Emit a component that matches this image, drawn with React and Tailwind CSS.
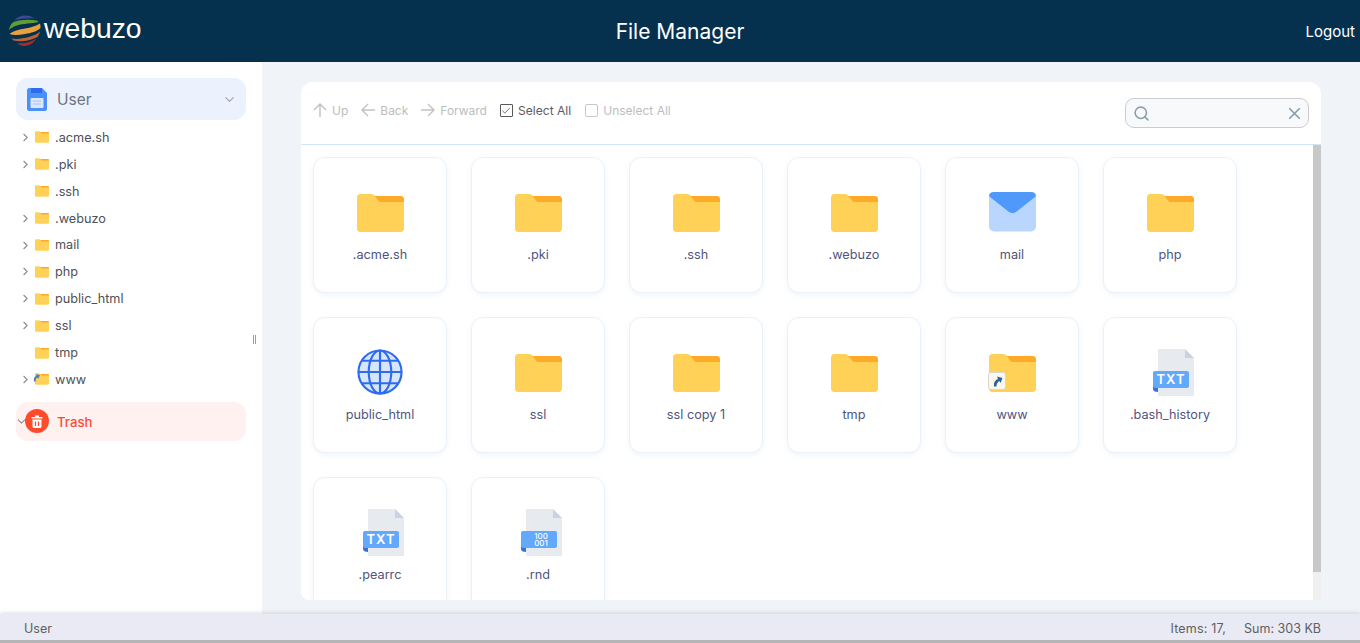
import React from 'react';
import { ChevronRight, ChevronDown, Search, X, Check } from 'lucide-react';

const Logo = () => (
  <svg width="33" height="32" viewBox="0 0 33 32">
    <path d="M6 5.500 C9 2 13 0.500 17 0.500 C21 0.500 24 1.500 26.500 3.500 C20 3 12 3.500 6 5.500Z" fill="#3a4a96" />
    <path d="M1 15 C1.500 11.500 3 9 5.500 7 C12 4.500 21 4 29 5.500 L30.500 7 C24 8.500 15 8.500 9 10.500 C5.500 11.500 3 13 1 15Z" fill="#5f9d35" />
    <path d="M1.500 19 C5 16 11 14.500 17 13.500 C23 12.500 28 11 32 8.500 C32.500 10 32.500 11.500 32.500 13 C29 16.500 23 18 17 19 C11 20 5.500 20.500 1.500 19Z" fill="#eaa03c" />
    <path d="M3.500 23.500 C9 24.500 15 23.500 21 22 C25.500 20.500 29.500 19 32 16.500 C31.500 18.500 30.500 20.500 29.500 22 C24 25 14 27.500 5.500 25.500Z" fill="#de6a2c" opacity="0.85" />
    <path d="M9 28 C15 29 22 27.500 28 24 C25.500 28 21 31 16.500 31 C13.500 31 11 29.800 9 28Z" fill="#a82a2c" />
  </svg>
);

const Folder = ({ w = 47, h = 38 }) => (
  <svg width={w} height={h} viewBox="0 0 47 38">
    <path d="M3 0 H14 C16 0 17 1 18 2 L22 7 H47 V35 C47 36.500 45.500 38 44 38 H3 C1.500 38 0 36.500 0 35 V3 C0 1.500 1.500 0 3 0Z" fill="#ffd257" />
    <path d="M17.500 2 H44 C45.500 2 47 3 47 5 V8 H23.500 C22 8 21.500 7 20.500 6Z" fill="#ffa928" />
  </svg>
);

const MailIcon = () => (
  <svg width="47" height="40" viewBox="0 0 47 40" className="-mt-[2px]">
    <rect x="0" y="0" width="47" height="39.500" rx="5" fill="#b9d6ff" />
    <path d="M5 0 H42 C46 0 48 3 46 5 L27 20 C25 21.500 22 21.500 20 20 L1 5 C-1 3 1 0 5 0Z" fill="#4f99fb" />
  </svg>
);

const GlobeIcon = () => (
  <svg width="46" height="46" viewBox="0 0 47 47" fill="#d6e6fd" stroke="#2f6bf2" strokeWidth="2.200" className="-mt-[2px]">
    <circle cx="23.500" cy="23.500" r="22" />
    <ellipse cx="23.500" cy="23.500" rx="11.500" ry="22" fill="none" />
    <path d="M23.500 1.500 V45.500 M1.500 23.500 H45.500 M4.500 12 H42.500 M4.500 35 H42.500" fill="none" />
  </svg>
);

const FileIcon = ({ kind }) => (
  <svg width="41" height="47" viewBox="0 0 41 47" className="-mt-[2px] ml-[7px] shrink-0">
    <path d="M5 0 H32 L41 9 V47 H5Z" fill="#e7eaee" />
    <path d="M32 0 L41 9 H32Z" fill="#cbd3e3" />
    <path d="M0 36 V40 C0 42 2 43 5 43 V38Z" fill="#3c70d6" />
    <rect x="0" y="22" width="36" height="17" rx="2" fill="#62a8fb" />
    {kind === 'txt' ? (
      <text x="18" y="35" textAnchor="middle" fill="#fff" fontSize="13" fontWeight="600" letterSpacing="1" fontFamily="Inter, sans-serif">TXT</text>
    ) : (
      <text x="20" y="29.500" textAnchor="middle" fill="#fff" fontSize="8" fontWeight="500" fontFamily="Inter, sans-serif">
        100
        <tspan x="20" dy="7.500">001</tspan>
      </text>
    )}
  </svg>
);

const ShortcutBadge = () => (
  <span className="absolute bottom-[7px] left-0 flex h-[18px] w-[18px] items-center justify-center rounded-[3px] border border-[#d8d8d0] bg-[#fbf9ef]">
    <svg width="11" height="12" viewBox="0 0 11 11">
      <path d="M2 11 C1.500 7 3 4.500 6 3.500 L5 1 L10.500 2.500 L8.500 7.500 L7.300 5.500 C5.500 6.500 4.500 8.500 4.500 11Z" fill="#2f6296" />
    </svg>
  </span>
);

const arrows = {
  up: 'M7 14V1 M1 7L7 1L13 7',
  back: 'M14 7H1 M7 1L1 7L7 13',
  forward: 'M0 7H13 M7 1L13 7L7 13',
};

const tree = [
  { name: '.acme.sh', arrow: true },
  { name: '.pki', arrow: true },
  { name: '.ssh' },
  { name: '.webuzo', arrow: true },
  { name: 'mail', arrow: true },
  { name: 'php', arrow: true },
  { name: 'public_html', arrow: true },
  { name: 'ssl', arrow: true },
  { name: 'tmp' },
  { name: 'www', arrow: true, link: true },
];

const files = [
  { name: '.acme.sh', icon: 'folder' },
  { name: '.pki', icon: 'folder' },
  { name: '.ssh', icon: 'folder' },
  { name: '.webuzo', icon: 'folder' },
  { name: 'mail', icon: 'mail' },
  { name: 'php', icon: 'folder' },
  { name: 'public_html', icon: 'globe' },
  { name: 'ssl', icon: 'folder' },
  { name: 'ssl copy 1', icon: 'folder' },
  { name: 'tmp', icon: 'folder' },
  { name: 'www', icon: 'link' },
  { name: '.bash_history', icon: 'txt' },
  { name: '.pearrc', icon: 'txt' },
  { name: '.rnd', icon: 'bin' },
];

const FileCard = ({ file }) => (
  <div className="flex h-[136px] w-[134px] shrink-0 flex-col items-center rounded-xl border border-[#eaf1f9] bg-white pt-[31px] shadow-[0_2px_5px_rgba(190,210,235,0.25)]">
    <div className="relative flex h-[48px] w-[48px] items-center justify-center">
      {file.icon === 'folder' && <Folder />}
      {file.icon === 'mail' && <MailIcon />}
      {file.icon === 'globe' && <GlobeIcon />}
      {file.icon === 'link' && (
        <>
          <Folder />
          <ShortcutBadge />
        </>
      )}
      {file.icon === 'txt' && <FileIcon kind="txt" />}
      {file.icon === 'bin' && <FileIcon kind="bin" />}
    </div>
    <div className="mt-[8px] text-[12.700px] leading-5 text-[#50557f]">{file.name}</div>
  </div>
);

const Tool = ({ dir, label, className }) => (
  <div className={`flex items-center gap-[5px] text-[12px] text-[#bdbdbd] ${className || ''}`}>
    <svg width="14" height="15" viewBox="0 0 14 15" fill="none" stroke="#c4c4c4" strokeWidth="1.500">
      <path d={arrows[dir]} />
    </svg>
    <span>{label}</span>
  </div>
);

export default function App() {
  return (
    <div className="flex h-[643px] w-[1360px] flex-col overflow-hidden bg-[#f0f4f9] font-['Inter',sans-serif]">
      <header className="relative flex h-[62px] shrink-0 items-center justify-between bg-[#05314f] pl-[8px] pr-[5px] text-white">
        <div className="flex items-center">
          <Logo />
          <span className="mb-[5px] ml-[3px] font-['Liberation_Sans',sans-serif] text-[28.300px] leading-none">webuzo</span>
        </div>
        <div className="absolute inset-x-0 pt-px text-center text-[21px]">File Manager</div>
        <div className="pt-[3px] text-[15px]">Logout</div>
      </header>

      <div className="flex min-h-0 flex-1">
        <aside className="relative w-[262px] shrink-0 bg-white px-4 pt-4">
          <div className="flex h-[42px] items-center rounded-xl bg-[#ebf2fe] pl-[11px] pr-[9px]">
            <svg width="20" height="23" viewBox="0 0 20 23">
              <path d="M2 0 H15 L20 5 V21 C20 22 19 23 18 23 H2 C1 23 0 22 0 21 V2 C0 1 1 0 2 0Z" fill="#4a90fb" />
              <rect x="4" y="0" width="11" height="5" fill="#2f6bea" />
              <rect x="3.500" y="10" width="13" height="10" rx="1" fill="#dbe8fb" />
              <path d="M6 13 H14 M6 16 H14" stroke="#a9c3ea" strokeWidth="1" />
            </svg>
            <span className="ml-[10px] flex-1 pt-px text-[15.500px] text-[#6f737c]">User</span>
            <ChevronDown size={15} className="text-[#a4a7ad]" />
          </div>

          <ul className="mt-[4px]">
            {tree.map((item) => (
              <li key={item.name} className="flex h-[26.900px] items-center">
                <span className="flex w-[16px] justify-end">
                  {item.arrow && <ChevronRight size={13} strokeWidth={2} className="text-[#8c8c8c]" />}
                </span>
                <span className="relative ml-[3px] flex w-[14px]">
                  <Folder w={14} h={12} />
                  {item.link && (
                    <svg width="7" height="11" viewBox="0 0 8 9" className="absolute left-[-2px] top-[-1px]">
                      <path d="M1 9 C0.500 5.500 2 3 4 2.500 L3.500 0.500 L8 2 L6 6 L5 4.500 C3.500 5 3 7 3 9Z" fill="#4f7db5" />
                    </svg>
                  )}
                </span>
                <span className="ml-[6px] text-[12.700px] text-[#4f5156]">{item.name}</span>
              </li>
            ))}
          </ul>

          <div className="relative mt-[9px] flex h-[39px] items-center rounded-xl bg-[#fff1f0]">
            <ChevronDown size={13} className="absolute left-[-1px] text-[#8f8f8f]" />
            <span className="relative ml-[9px] flex h-6 w-6 items-center justify-center rounded-full bg-[#fe4b2c]">
              <svg width="12" height="13" viewBox="0 0 12 13" fill="#fff">
                <path d="M4 0.500 H8 V2 H11.500 V3.500 H0.500 V2 H4Z" />
                <path d="M1.500 4.500 H10.500 V11.500 C10.500 12.300 9.800 13 9 13 H3 C2.200 13 1.500 12.300 1.500 11.500Z" />
                <path d="M4.500 6.500 V11 M7.500 6.500 V11" stroke="#fe4b2c" strokeWidth="1.200" />
              </svg>
            </span>
            <span className="ml-2 pt-[3px] text-[13.200px] font-medium text-[#ff4a33]">Trash</span>
          </div>

          <div className="absolute left-[253px] top-[273px] flex gap-[1px]">
            <span className="h-[9px] w-px bg-[#9c9c9c]" />
            <span className="h-[9px] w-px bg-[#9c9c9c]" />
          </div>
        </aside>

        <main className="min-w-0 flex-1 pl-[39px] pt-5">
          <div className="flex h-[518px] w-[1020px] flex-col overflow-hidden rounded-t-xl rounded-bl-lg bg-white">
            <div className="flex h-[63px] shrink-0 items-center border-b border-[#cfe6f8] pl-3 pr-3">
              <div className="mb-[4px] flex items-center">
                <Tool dir="up" label="Up" />
                <Tool dir="back" label="Back" className="ml-[13px]" />
                <Tool dir="forward" label="Forward" className="ml-[13px]" />
                <div className="ml-[13px] flex items-center gap-[5px] text-[12.100px] text-[#5b5d63]">
                  <span className="flex h-[13px] w-[13px] items-center justify-center rounded-[1px] border-[1.500px] border-[#56585e]">
                    <Check size={10} strokeWidth={2.200} />
                  </span>
                  Select All
                </div>
                <div className="ml-[14px] flex items-center gap-[5px] text-[12px] text-[#bdbdbd]">
                  <span className="h-[13px] w-[13px] rounded-[2px] border-[1.500px] border-[#c8c8c8]" />
                  Unselect All
                </div>
              </div>
              <div className="ml-auto flex h-[30px] w-[184px] items-center justify-between rounded-[9px] border border-[#cccccc] bg-[#f7f9fb] pl-[7px] pr-[4px] text-[#8aa0a8]">
                <Search size={17} strokeWidth={2.300} />
                <X size={19} strokeWidth={2.200} />
              </div>
            </div>

            <div className="flex min-h-0 flex-1">
              <div className="min-w-0 flex-1 overflow-hidden">
                <div className="flex flex-wrap gap-6 pl-3 pt-3">
                  {files.map((f) => (
                    <FileCard key={f.name} file={f} />
                  ))}
                </div>
              </div>
              <div className="w-2 shrink-0 bg-[#f0f0f0]">
                <div className="h-[427px] bg-[#c8c8c8]" />
              </div>
            </div>
          </div>
        </main>
      </div>

      <footer className="relative flex h-[29px] shrink-0 items-start justify-between border-b-[3px] border-[#b5b5b8] bg-[#e9eaf3] pl-6 pr-[39px] text-[12.500px] leading-[29px] text-[#5d5f66] shadow-[0_-1px_4px_rgba(150,150,160,0.35)]">
        <span>User</span>
        <span className="flex gap-[18px]">
          <span className="tracking-[0.200px]">Items: 17,</span>
          <span>Sum: 303 KB</span>
        </span>
      </footer>
    </div>
  );
}
